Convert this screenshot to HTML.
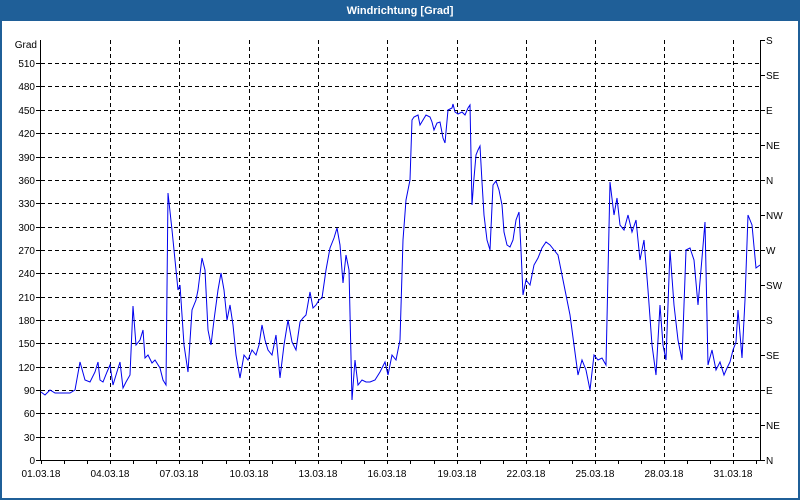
<!DOCTYPE html>
<html><head><meta charset="utf-8"><style>
html,body{margin:0;padding:0;width:800px;height:500px;overflow:hidden;background:#fff}
</style></head><body>
<svg width="800" height="500" xmlns="http://www.w3.org/2000/svg" font-family="Liberation Sans, sans-serif" font-size="10">
<rect x="0" y="0" width="800" height="500" fill="#1f5f98"/>
<rect x="2" y="21" width="796" height="477" fill="#fff"/>
<text x="400" y="14" fill="#fff" font-weight="bold" font-size="11" text-anchor="middle">Windrichtung [Grad]</text>
<g stroke="#000" stroke-dasharray="4,3" stroke-width="1">
<line x1="41" y1="63.5" x2="760" y2="63.5"/><line x1="41" y1="86.5" x2="760" y2="86.5"/><line x1="41" y1="110.5" x2="760" y2="110.5"/><line x1="41" y1="133.5" x2="760" y2="133.5"/><line x1="41" y1="157.5" x2="760" y2="157.5"/><line x1="41" y1="180.5" x2="760" y2="180.5"/><line x1="41" y1="203.5" x2="760" y2="203.5"/><line x1="41" y1="227.5" x2="760" y2="227.5"/><line x1="41" y1="250.5" x2="760" y2="250.5"/><line x1="41" y1="273.5" x2="760" y2="273.5"/><line x1="41" y1="297.5" x2="760" y2="297.5"/><line x1="41" y1="320.5" x2="760" y2="320.5"/><line x1="41" y1="343.5" x2="760" y2="343.5"/><line x1="41" y1="367.5" x2="760" y2="367.5"/><line x1="41" y1="390.5" x2="760" y2="390.5"/><line x1="41" y1="413.5" x2="760" y2="413.5"/><line x1="41" y1="437.5" x2="760" y2="437.5"/>
<line x1="110.5" y1="40" x2="110.5" y2="460"/><line x1="179.5" y1="40" x2="179.5" y2="460"/><line x1="249.5" y1="40" x2="249.5" y2="460"/><line x1="318.5" y1="40" x2="318.5" y2="460"/><line x1="387.5" y1="40" x2="387.5" y2="460"/><line x1="457.5" y1="40" x2="457.5" y2="460"/><line x1="526.5" y1="40" x2="526.5" y2="460"/><line x1="595.5" y1="40" x2="595.5" y2="460"/><line x1="664.5" y1="40" x2="664.5" y2="460"/><line x1="733.5" y1="40" x2="733.5" y2="460"/>
</g>
<g stroke="#000" stroke-width="1" fill="none">
<path d="M40.5 40V460.5H760.5V40"/>
<path d="M36 63.5h5M36 86.5h5M36 110.5h5M36 133.5h5M36 157.5h5M36 180.5h5M36 203.5h5M36 227.5h5M36 250.5h5M36 273.5h5M36 297.5h5M36 320.5h5M36 343.5h5M36 367.5h5M36 390.5h5M36 413.5h5M36 437.5h5M36 460.5h5"/>
<path d="M760 40.5h5M760 75.5h5M760 110.5h5M760 145.5h5M760 180.5h5M760 215.5h5M760 250.5h5M760 285.5h5M760 320.5h5M760 355.5h5M760 390.5h5M760 425.5h5M760 460.5h5"/>
<path d="M41.5 460v4M64.5 460v4M87.5 460v4M110.5 460v4M133.5 460v4M156.5 460v4M179.5 460v4M202.5 460v4M226.5 460v4M249.5 460v4M272.5 460v4M295.5 460v4M318.5 460v4M341.5 460v4M364.5 460v4M387.5 460v4M410.5 460v4M434.5 460v4M457.5 460v4M480.5 460v4M503.5 460v4M526.5 460v4M549.5 460v4M572.5 460v4M595.5 460v4M618.5 460v4M641.5 460v4M664.5 460v4M687.5 460v4M710.5 460v4M733.5 460v4M756.5 460v4"/>
</g>
<g fill="#000" text-anchor="end">
<text x="37" y="48">Grad</text>
<text x="35" y="67">510</text><text x="35" y="90">480</text><text x="35" y="114">450</text><text x="35" y="137">420</text><text x="35" y="161">390</text><text x="35" y="184">360</text><text x="35" y="207">330</text><text x="35" y="231">300</text><text x="35" y="254">270</text><text x="35" y="277">240</text><text x="35" y="301">210</text><text x="35" y="324">180</text><text x="35" y="347">150</text><text x="35" y="371">120</text><text x="35" y="394">90</text><text x="35" y="417">60</text><text x="35" y="441">30</text><text x="35" y="464">0</text>
</g>
<g fill="#000">
<text x="766" y="44">S</text><text x="766" y="79">SE</text><text x="766" y="114">E</text><text x="766" y="149">NE</text><text x="766" y="184">N</text><text x="766" y="219">NW</text><text x="766" y="254">W</text><text x="766" y="289">SW</text><text x="766" y="324">S</text><text x="766" y="359">SE</text><text x="766" y="394">E</text><text x="766" y="429">NE</text><text x="766" y="464">N</text>
</g>
<g fill="#000" text-anchor="middle">
<text x="41" y="477">01.03.18</text><text x="110" y="477">04.03.18</text><text x="179" y="477">07.03.18</text><text x="249" y="477">10.03.18</text><text x="318" y="477">13.03.18</text><text x="387" y="477">16.03.18</text><text x="457" y="477">19.03.18</text><text x="526" y="477">22.03.18</text><text x="595" y="477">25.03.18</text><text x="664" y="477">28.03.18</text><text x="733" y="477">31.03.18</text>
</g>
<polyline fill="none" stroke="#0000ee" stroke-width="1" points="41,392 45,395 50,390 55,393 60,393 70,393 75,390 80,362 85,380 90,382 95,372 98,362 100,380 103,382 107,372 110,365 113,385 116,375 120,362 123,388 126,382 130,375 133,306 136,345 140,340 143,330 145,358 148,355 152,363 155,360 160,368 163,380 166,385 168,193 172,230 175,260 178,290 180,285 184,345 188,372 192,310 196,300 198,290 202,258 205,270 208,330 211,345 214,320 218,290 221,273 224,290 227,320 230,305 233,325 236,355 240,378 244,355 248,360 252,350 256,355 259,345 262,325 265,340 268,350 272,355 276,335 280,378 284,345 288,320 292,342 296,350 300,322 303,318 306,315 310,292 313,308 316,305 319,300 322,298 326,270 330,248 334,238 337,228 340,245 343,283 346,255 349,270 352,400 355,360 358,385 362,380 366,382 370,382 375,380 380,372 385,362 388,375 392,355 396,360 400,340 403,240 406,200 410,180 412,120 414,117 418,115 420,125 423,120 426,115 430,117 432,122 434,130 437,123 440,122 443,138 445,143 448,110 452,108 453,104 455,112 458,114 462,112 465,115 468,108 470,105 472,205 474,178 476,155 478,150 480,146 482,182 484,215 487,240 490,250 493,185 496,181 499,190 502,205 504,232 507,245 510,247 513,240 516,220 519,212 521,250 523,295 526,280 530,285 534,265 538,258 542,248 546,242 550,245 554,250 558,255 562,275 566,295 570,315 574,345 578,375 582,360 586,370 590,390 594,355 598,360 602,358 606,365 610,182 614,215 617,198 620,225 624,230 628,215 632,232 636,220 640,260 644,240 648,290 652,345 656,375 660,305 663,345 666,360 670,250 674,305 678,340 682,360 686,250 690,248 694,260 698,305 702,258 705,222 708,365 712,350 716,370 720,362 724,375 727,368 730,362 733,350 736,342 738,310 742,358 745,300 748,215 752,225 756,268 760,265"/>
</svg>
</body></html>
